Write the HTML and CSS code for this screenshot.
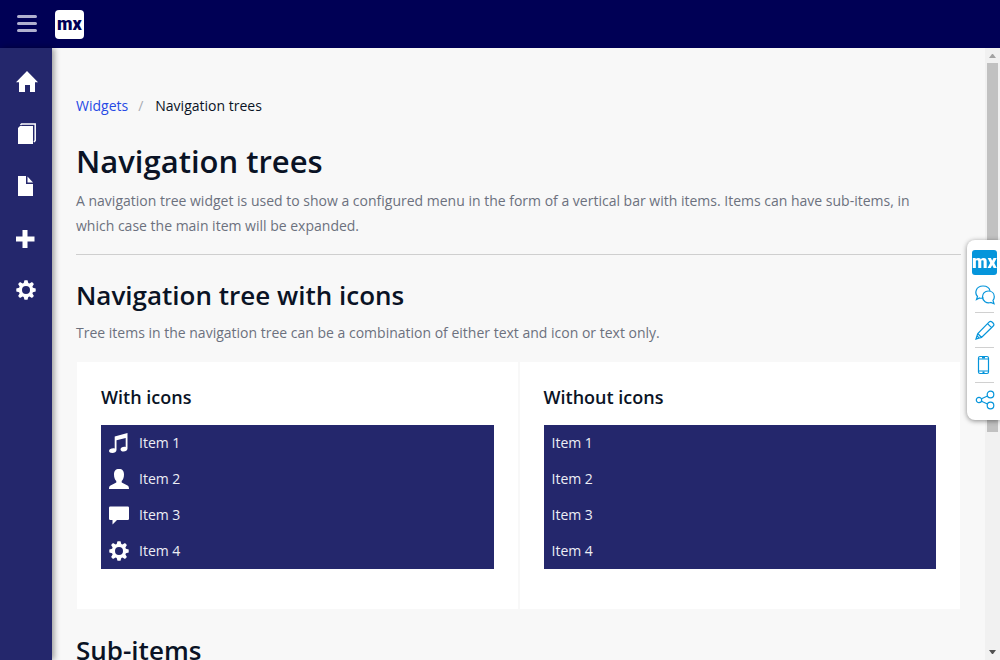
FILE: index.html
```html
<!DOCTYPE html>
<html lang="en">
<head>
<meta charset="utf-8">
<title>Navigation trees</title>
<link rel="stylesheet" href="styles.css">
</head>
<body>
<svg class="sprite" aria-hidden="true">
  <symbol id="cog" viewBox="0 0 20 20"><path fill-rule="evenodd" d="M8.500 .3H11.500L12.300 3.100 13.400 3.600 16 2.100 17.900 4 16.400 6.600 16.900 7.700 19.700 8.500V11.500L16.900 12.300 16.400 13.400 17.900 16 16 17.900 13.400 16.400 12.300 16.900 11.500 19.700H8.500L7.700 16.900 6.600 16.400 4 17.900 2.100 16 3.600 13.400 3.100 12.300 .3 11.500V8.500L3.100 7.700 3.600 6.600 2.100 4 4 2.100 6.600 3.600 7.700 3.100ZM10 6A4 4 0 1 0 10 14A4 4 0 1 0 10 6Z"/></symbol>
</svg>
<header class="topbar">
  <button class="menu-toggle" aria-label="Toggle menu"><svg width="20" height="18" viewBox="0 0 20 18"><path d="M1.500 1.500H18.500M1.500 8.500H18.500M1.500 15.500H18.500"/></svg></button>
  <a class="brand" href="#">mx</a>
</header>
<div class="shell">
  <nav class="sidebar" aria-label="Main">
    <a href="#" aria-label="Home"><svg viewBox="0 0 22 22"><path d="M11 0 22 11.200H19V21H14V14H9V21H3V11.200H0Z"/></svg></a>
    <a href="#" aria-label="Pages"><svg viewBox="0 0 22 22"><path d="M4 3H17V21H2V5Z"/><path d="M4.500 2 5.500 1H19.200V17.500L18 19" fill="none" stroke="#fff" stroke-width="1.500"/></svg></a>
    <a href="#" aria-label="Document"><svg viewBox="0 0 22 22"><path d="M2 1H10V9H17V21H2Z"/><path d="M11.500 1.500 17 7.500H11.500Z"/></svg></a>
    <a href="#" aria-label="Add"><svg viewBox="0 0 22 22"><path d="M6.500 3H11.500V9.500H18.500V14.500H11.500V21H6.500V14.500H0V9.500H6.500Z"/></svg></a>
    <a href="#" aria-label="Settings"><svg viewBox="0 0 22 22"><use href="#cog" width="20" height="20" y="1"/></svg></a>
  </nav>
  <main class="content">
    <nav class="breadcrumb" aria-label="Breadcrumb"><a href="#">Widgets</a><span class="divider">/</span><span>Navigation trees</span></nav>
    <h1>Navigation trees</h1>
    <p class="lead">A navigation tree widget is used to show a configured menu in the form of a vertical bar with items. Items can have sub-items, in which case the main item will be expanded.</p>
    <hr>
    <h2>Navigation tree with icons</h2>
    <p>Tree items in the navigation tree can be a combination of either text and icon or text only.</p>
    <div class="cards">
      <section class="card">
        <h3>With icons</h3>
        <ul class="tree">
          <li><a href="#"><svg viewBox="0 0 20 20"><path d="M5.700 3.500 18.500 0V15.500C18.500 17.500 16.700 18.500 14.500 18.500 12.900 18.500 11.500 17.600 11.500 16.400 11.500 14.500 14 13.500 16.700 14V5L7.500 7.300V17C7.500 19 5.500 20 3.300 20 1.400 20 0 19.200 0 18 0 16 3 15 5.700 15.500Z"/></svg>Item 1</a></li>
          <li><a href="#"><svg viewBox="0 0 20 20"><path d="M10 0C13.500 0 15 2 15 5.500 15 8.500 14 11 12.700 12V13.500L18.500 16.500C19.600 17.200 20 18 20 20H0C0 18 .4 17.200 1.500 16.500L7.300 13.500V12C6 11 5 8.500 5 5.500 5 2 6.500 0 10 0Z"/></svg>Item 2</a></li>
          <li><a href="#"><svg viewBox="0 0 20 20"><path d="M1.200 1.500H18.800Q20 1.500 20 2.700V13.800Q20 15 18.800 15H8L3.500 19.500V15H1.200Q0 15 0 13.800V2.700Q0 1.500 1.200 1.500Z"/></svg>Item 3</a></li>
          <li><a href="#"><svg viewBox="0 0 20 20"><use href="#cog"/></svg>Item 4</a></li>
        </ul>
      </section>
      <section class="card">
        <h3>Without icons</h3>
        <ul class="tree">
          <li><a href="#">Item 1</a></li>
          <li><a href="#">Item 2</a></li>
          <li><a href="#">Item 3</a></li>
          <li><a href="#">Item 4</a></li>
        </ul>
      </section>
    </div>
    <h2>Sub-items</h2>
  </main>
  <div class="scrollbar" aria-hidden="true">
    <svg width="7" height="4" viewBox="0 0 7 4"><path d="M3 0H4L7 4H0Z" fill="#a3a3a3"/></svg>
    <div class="thumb"></div>
    <svg class="down" width="7" height="4" viewBox="0 0 7 4"><path d="M0 0H7L4 4H3Z" fill="#505050"/></svg>
  </div>
</div>
<aside class="toolbox" aria-label="Tools">
  <a class="tool-brand" href="#">mx</a>
  <button aria-label="Feedback"><svg viewBox="0 0 20 20"><path d="M8.500 12.800Q6.500 13.600 4.500 13L1.500 14.500 2.500 11.500C-.5 8.500 .5 1 8 1C12 1 14.500 3 15 6"/><path d="M13.200 6C17 6 19.300 8.500 19.300 11.800Q19.300 14 18 15.500L19 18.700 15.800 17.500C11.500 18.800 7.500 16 7.500 12C7.500 8.500 10 6 13.200 6Z"/></svg></button>
  <button aria-label="Edit"><svg viewBox="0 0 20 20"><path d="M1 19 2.800 13.500 14 2.200Q15.500 .7 17 2L18.500 3.500Q19.500 5 18 6.200L6.500 17.500ZM2.800 13.500 6.500 17.500M12.500 3.700 16.500 7.700M1 19 2 15.800 4.200 18Z"/></svg></button>
  <button aria-label="Phone preview"><svg viewBox="0 0 20 20"><rect x="3.500" y="1.500" width="10" height="17" rx="1.500"/><path d="M3.500 4H13.500M3.500 16H13.500M7 2.700H10M7.500 17.300H9.500"/></svg></button>
  <button aria-label="Share"><svg viewBox="0 0 20 20"><circle cx="4" cy="10" r="2.700"/><circle cx="15.500" cy="4.500" r="3.300"/><circle cx="15.500" cy="15.500" r="3.300"/><path d="M6.500 8.700 12.500 6M6.500 11.300 12.500 14"/></svg></button>
</aside>
</body>
</html>
```
FILE: styles.css
```css
* { box-sizing: border-box; }
body {
  margin: 0;
  height: 100vh;
  display: flex;
  flex-direction: column;
  overflow: hidden;
  background: #f8f8f8;
  color: #0a1325;
  font: 14px/25px "Open Sans", sans-serif;
}
a { text-decoration: none; }
button { border: 0; padding: 0; background: none; }
.sprite { display: none; }
.topbar {
  flex: none;
  height: 48px;
  display: flex;
  align-items: center;
  gap: 18px;
  padding: 0 17px;
  background: #000055;
}
.menu-toggle { display: flex; }
.menu-toggle svg { stroke: #b0b0cf; stroke-width: 3; stroke-linecap: round; }
.brand, .tool-brand {
  display: flex;
  align-items: center;
  justify-content: center;
  padding-bottom: 2px;
  font-family: Roboto, sans-serif;
  font-size: 18px;
  font-weight: 900;
}
.brand {
  width: 29px;
  height: 29px;
  border-radius: 4px;
  background: #fff;
  color: #000055;
}
.shell { flex: 1; min-height: 0; display: flex; }
.sidebar {
  flex: none;
  width: 52px;
  padding: 8px 0;
  background: #24276c;
  box-shadow: 2px 0 6px rgba(0, 0, 0, .4);
}
.sidebar a {
  display: flex;
  align-items: center;
  height: 52px;
  padding-left: 16px;
}
.sidebar svg { width: 22px; height: 22px; fill: #fff; }
.content { flex: 1; min-width: 0; overflow: hidden; padding: 45px 24px 0; }
.breadcrumb { display: flex; }
.breadcrumb a { color: #264ae5; }
.divider { padding: 0 12px 0 10px; color: #a9acb3; }
h1, h2, h3 { margin: 0; font-weight: 600; }
h1 { margin: 22px 0 6px; font-size: 31px; line-height: 42px; }
h2 { margin: 23px 0 7px; font-size: 26px; line-height: 35px; }
h3 { margin-bottom: 16px; font-size: 18px; line-height: 24px; }
p { margin: 0 0 16px; color: #6c717e; }
.lead { padding-right: 16px; }
hr { margin: 0; border: 0; border-top: 1px solid #cfcfcf; }
.cards { display: grid; grid-template-columns: 1fr 1fr; gap: 2px; padding: 1px; }
.card { padding: 23px 24px 40px; background: #fff; }
.tree { margin: 0; padding: 0; list-style: none; background: #24276c; line-height: 24px; }
.tree a {
  display: flex;
  align-items: center;
  gap: 10px;
  height: 36px;
  padding: 0 8px;
  color: #edeef5;
}
.tree svg { width: 20px; height: 20px; fill: #fff; }
.scrollbar {
  flex: none;
  width: 15px;
  display: flex;
  flex-direction: column;
  align-items: center;
  padding: 6px 0;
  background: #f1f1f1;
}
.thumb { width: 11px; height: 61.5%; margin-top: 5px; background: #c1c1c1; }
.down { margin-top: auto; }
.toolbox {
  position: fixed;
  top: 240px;
  right: 0;
  width: 33px;
  padding: 10px 3px 3px 5px;
  border-radius: 8px 0 0 8px;
  background: #fff;
  box-shadow: 0 1px 5px rgba(0, 0, 0, .45);
}
.tool-brand {
  width: 25px;
  height: 25px;
  margin-bottom: 2px;
  border-radius: 3px;
  background: #0595db;
  color: #fff;
}
.toolbox button {
  display: flex;
  align-items: center;
  justify-content: center;
  width: 19px;
  height: 35px;
  margin-left: 3px;
}
.toolbox button + button { border-top: 1px solid #d0d0d0; }
.toolbox svg { flex: none; width: 20px; height: 20px; fill: none; stroke: #0595db; stroke-width: 1.2; }
```
